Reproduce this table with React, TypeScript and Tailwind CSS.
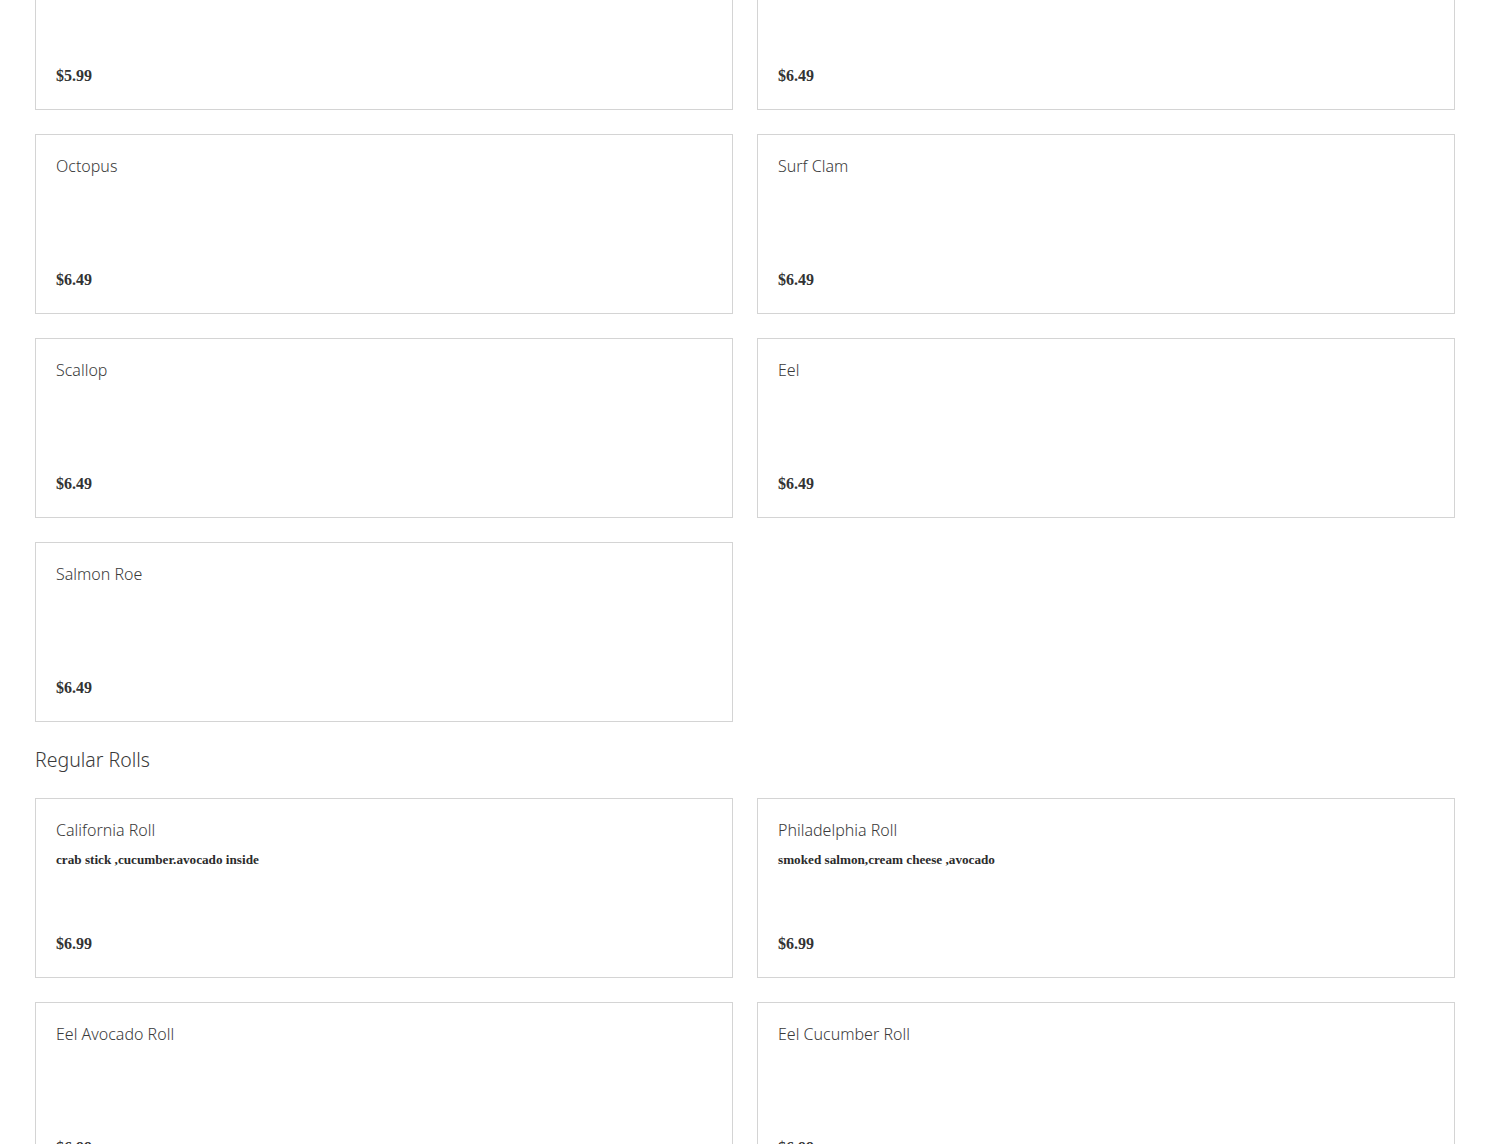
import React from "react";

type Item = { name: string; desc?: string; price: string };

const sushi: Item[] = [
  { name: "Tuna", price: "$5.99" },
  { name: "Yellowtail", price: "$6.49" },
  { name: "Octopus", price: "$6.49" },
  { name: "Surf Clam", price: "$6.49" },
  { name: "Scallop", price: "$6.49" },
  { name: "Eel", price: "$6.49" },
  { name: "Salmon Roe", price: "$6.49" },
];

const rolls: Item[] = [
  { name: "California Roll", desc: "crab stick ,cucumber.avocado inside", price: "$6.99" },
  { name: "Philadelphia Roll", desc: "smoked salmon,cream cheese ,avocado", price: "$6.99" },
  { name: "Eel Avocado Roll", price: "$6.99" },
  { name: "Eel Cucumber Roll", price: "$6.99" },
];

const sans = { fontFamily: '"Noto Sans", "Liberation Sans", sans-serif' };
const serif = { fontFamily: '"Liberation Serif", "DejaVu Serif", serif' };

function Card({ item }: { item: Item }) {
  return (
    <div className="h-[180px] border border-[#d4d4d4] px-5 pt-[19px] pb-[19px] flex flex-col justify-between bg-white">
      <div>
        <div className="text-[16px] leading-[24px] text-[#3a3a3a] font-light" style={sans}>
          {item.name}
        </div>
        {item.desc && (
          <div className="text-[13.2px] leading-[20px] mt-[8px] text-[#2b2b2b] font-bold" style={serif}>
            {item.desc}
          </div>
        )}
      </div>
      <div className="text-[16px] leading-[28px] text-[#333] font-bold" style={serif}>
        {item.price}
      </div>
    </div>
  );
}

export default function App() {
  return (
    <div className="h-[1144px] overflow-hidden bg-white">
      <div className="px-[35px] -mt-[70px]">
        <div className="grid grid-cols-2 gap-6">
          {sushi.map((it) => (
            <Card key={it.name} item={it} />
          ))}
        </div>
        <h2 className="text-[19.5px] leading-[30px] text-[#3a3a3a] font-light mt-[23px] mb-[23px]" style={sans}>
          Regular Rolls
        </h2>
        <div className="grid grid-cols-2 gap-6">
          {rolls.map((it) => (
            <Card key={it.name} item={it} />
          ))}
        </div>
      </div>
    </div>
  );
}
